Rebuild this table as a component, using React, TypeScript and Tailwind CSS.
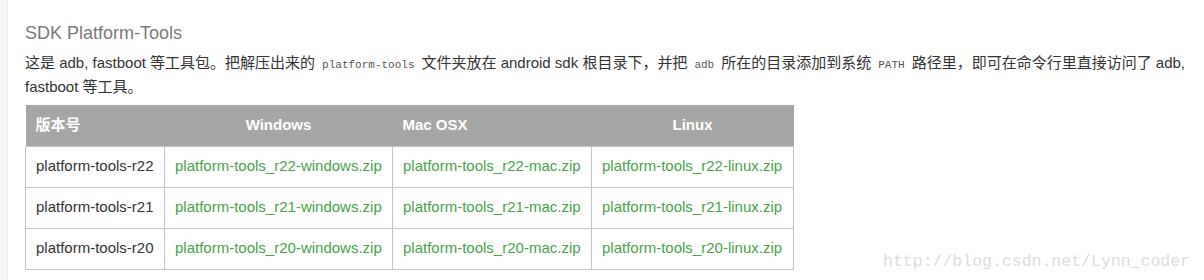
import React from "react";

const rows = ["r22", "r21", "r20"];

function Code({ children }: { children: React.ReactNode }) {
  return (
    <code className="mx-[5px] px-[2px] font-['Liberation_Mono',monospace] text-[11px] text-[#555]">
      {children}
    </code>
  );
}

export default function App() {
  return (
    <div className="flex h-[280px] w-[1204px] overflow-hidden bg-white font-['Liberation_Sans','Noto_Sans_CJK_SC',sans-serif] text-[15px] text-[#333]">
      <div className="w-[8px] shrink-0 border-r border-[#ececec] bg-[#f7f7f7]" />
      <div className="relative flex-1 pl-[17px] pt-[22px]">
        <h2 className="text-[18px] leading-[22px] text-[#7a7a7a]">SDK Platform-Tools</h2>
        <p className="mt-[8px] leading-[21px]">
          这是 adb, fastboot 等工具包。把解压出来的<Code>platform-tools</Code>文件夹放在 android sdk 根目录下，并把
          <Code>adb</Code>所在的目录添加到系统<Code>PATH</Code>路径里，即可在命令行里直接访问了 adb,
          <br />
          fastboot 等工具。
        </p>
        <table className="mt-[8px] border-collapse text-left">
          <thead>
            <tr className="h-[41px] bg-[#a6a6a6] font-bold text-white">
              <th className="w-[139px] px-[10px]">版本号</th>
              <th className="w-[228px] px-[10px] text-center">Windows</th>
              <th className="w-[199px] px-[10px]">Mac OSX</th>
              <th className="w-[202px] px-[10px] text-center">Linux</th>
            </tr>
          </thead>
          <tbody>
            {rows.map((r) => (
              <tr key={r} className="h-[41px]">
                <td className="border border-[#c4c4c4] px-[10px]">platform-tools-{r}</td>
                <td className="border border-[#c4c4c4] px-[10px] text-[#47a447]">platform-tools_{r}-windows.zip</td>
                <td className="border border-[#c4c4c4] px-[10px] text-[#47a447]">platform-tools_{r}-mac.zip</td>
                <td className="border border-[#c4c4c4] px-[10px] text-[#47a447]">platform-tools_{r}-linux.zip</td>
              </tr>
            ))}
          </tbody>
        </table>
        <div className="absolute bottom-[5px] right-[14px] font-['Liberation_Mono',monospace] text-[16.5px] text-[#dcdcdc]">
          http://blog.csdn.net/Lynn_coder
        </div>
      </div>
    </div>
  );
}
